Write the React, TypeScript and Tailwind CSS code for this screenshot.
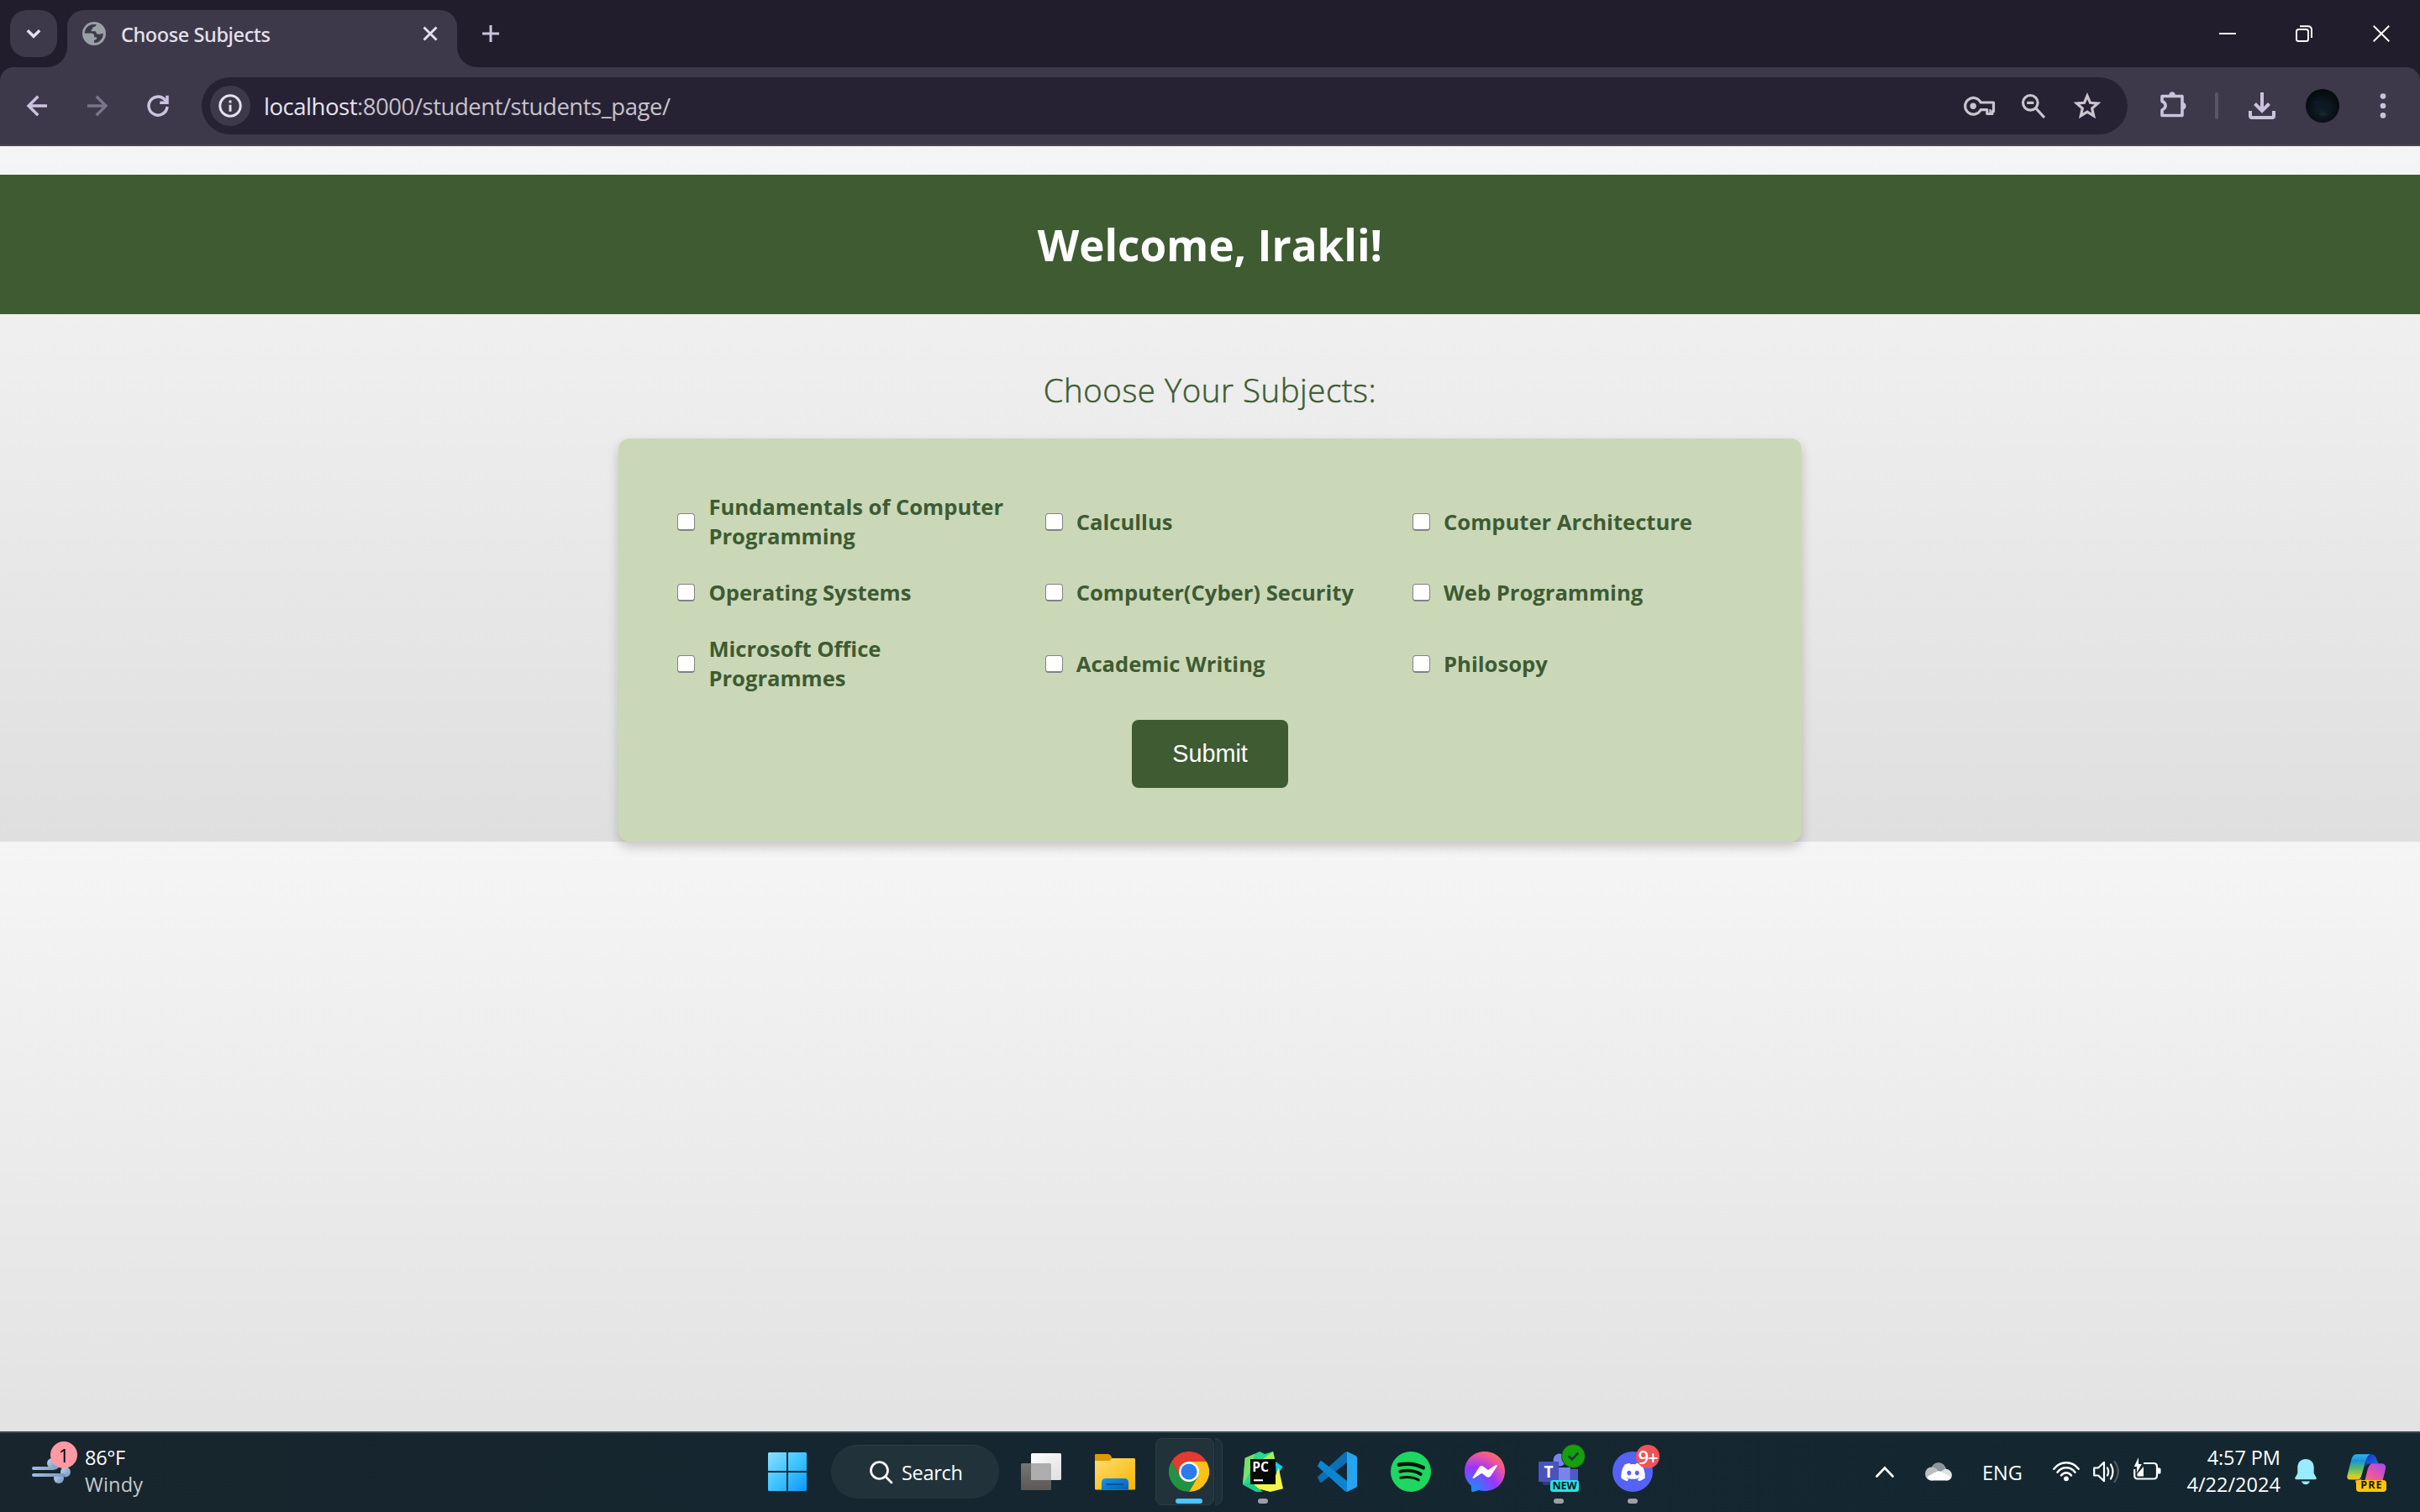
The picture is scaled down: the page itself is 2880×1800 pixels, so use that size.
import React from 'react';
import { FaDiscord } from 'react-icons/fa6';

type Kids = { children?: React.ReactNode };

const subjects = [
  'Fundamentals of Computer Programming',
  'Calcullus',
  'Computer Architecture',
  'Operating Systems',
  'Computer(Cyber) Security',
  'Web Programming',
  'Microsoft Office Programmes',
  'Academic Writing',
  'Philosopy',
];

/* ---------- Browser chrome ---------- */

function Globe() {
  return (
    <svg width="28" height="28" viewBox="0 0 28 28">
      <circle cx="14" cy="14" r="14" fill="#9aa0a6" />
      <path
        d="M2.7 13.8C2.9 8 6.900 3.700 12 2.900L17 3.200L15.400 5.600L12.600 6.300L12 8.800L10.200 9.600L11.200 11.200L15.800 11.200L17.300 14.600L21.200 14.800L24.600 13.400C25.400 18.200 21.400 24.600 14.600 25.200L13.700 22.200L17 20.600L17.200 18.600L14.300 18.300L13.600 14.600L10.600 13.600Z"
        fill="#3d394b"
      />
    </svg>
  );
}

function TabStrip() {
  return (
    <div className="flex h-[80px] items-start bg-[#211d2d] pl-3">
      <div className="mt-3 flex h-14 w-14 items-center justify-center rounded-[20px] bg-[#3d394b]">
        <svg width="20" height="14" viewBox="0 0 20 14" fill="none" stroke="#e6e0ec" strokeWidth="3.400">
          <path d="M2.800 3.200L10 10.300L17.200 3.200" />
        </svg>
      </div>
      <div className="relative mt-3 ml-3 flex h-[68px] w-[464px] rounded-t-[20px] bg-[#3d394b]">
        <svg className="absolute bottom-0 -left-6" width="24" height="24" viewBox="0 0 24 24">
          <path d="M24 0V24H0A24 24 0 0 0 24 0Z" fill="#3d394b" />
        </svg>
        <svg className="absolute -right-6 bottom-0" width="24" height="24" viewBox="0 0 24 24">
          <path d="M0 0V24H24A24 24 0 0 1 0 0Z" fill="#3d394b" />
        </svg>
        <div className="flex h-14 w-full items-center pl-[18px]">
          <Globe />
          <span className="mt-[2px] ml-[18px] font-['Noto_Sans',sans-serif] text-[23.5px] leading-8 font-medium tracking-[-0.4px] text-[#e6e0ec]">
            Choose Subjects
          </span>
          <svg className="mr-[23px] ml-auto" width="18" height="18" viewBox="0 0 18 18" fill="none" stroke="#e6e0ec" strokeWidth="3">
            <path d="M1.500 1.500L16.500 16.500M16.500 1.500L1.500 16.500" />
          </svg>
        </div>
      </div>
      <svg className="mt-[30px] ml-[30px]" width="20" height="20" viewBox="0 0 20 20" fill="none" stroke="#cbc3dd" strokeWidth="3">
        <path d="M10 0V20M0 10H20" />
      </svg>
      <div className="ml-auto flex h-[80px] items-center text-white">
        <div className="flex w-[92px] justify-center pl-[2px]">
          <svg width="20" height="20" viewBox="0 0 20 20">
            <path d="M0 9H20V11H0Z" fill="currentColor" />
          </svg>
        </div>
        <div className="flex w-[92px] justify-center">
          <svg width="20" height="20" viewBox="0 0 20 20" fill="none" stroke="currentColor" strokeWidth="2">
            <rect x="1" y="5" width="14" height="14" rx="2.500" />
            <path d="M5 1.200H14.500Q19 1.200 19 5.700V15" />
          </svg>
        </div>
        <div className="flex w-[92px] justify-center">
          <svg width="20" height="20" viewBox="0 0 20 20" fill="none" stroke="currentColor" strokeWidth="2">
            <path d="M.7 .7L19.300 19.300M19.300 .7L.7 19.300" />
          </svg>
        </div>
      </div>
    </div>
  );
}

function NavCell({ children }: Kids) {
  return <div className="flex w-[72px] shrink-0 items-center justify-center">{children}</div>;
}

function FieldCell({ children }: Kids) {
  return <div className="flex w-16 shrink-0 items-center justify-center">{children}</div>;
}

function Toolbar() {
  return (
    <div className="bg-[#211d2d]">
      <div className="flex h-[94px] items-center rounded-t-[16px] border-b-2 border-[#4a454e] bg-[#3d394b] pl-2 text-[#cbc3dd]">
        <NavCell>
          <svg width="36" height="36" viewBox="0 0 36 36" fill="none" stroke="currentColor" strokeWidth="3.400">
            <path d="M30 18H8M19.300 6.700L8 18L19.300 29.300" />
          </svg>
        </NavCell>
        <NavCell>
          <svg width="36" height="36" viewBox="0 0 36 36" fill="none" stroke="#7a7588" strokeWidth="3.400">
            <path d="M6 18H28M16.700 6.700L28 18L16.700 29.300" />
          </svg>
        </NavCell>
        <NavCell>
          <svg width="36" height="36" viewBox="0 0 36 36" fill="none" stroke="currentColor" strokeWidth="3.500">
            <path d="M29 19A11 11 0 1 1 26 10.500L28.500 13" />
            <path d="M29 5.700V14.200H20.200" />
          </svg>
        </NavCell>

        <div className="ml-4 flex h-[68px] w-[2292px] items-center rounded-full bg-[#262234] pr-4 pl-[10px]">
          <div className="flex h-12 w-12 items-center justify-center rounded-full bg-[#3d394b]">
            <svg width="28" height="28" viewBox="0 0 28 28" fill="none" stroke="#e6e0ec" strokeWidth="3">
              <circle cx="14" cy="14" r="12.200" />
              <path d="M14 12.700V20.700M14 7.400V10.400" />
            </svg>
          </div>
          <span className="mt-px ml-[16px] font-['Open_Sans',sans-serif] text-[27.5px] leading-10 tracking-[-0.46px] text-[#c8c2cc]">
            <span className="text-[#e9e4ef]">localhost</span>:8000/student/students_page/
          </span>
          <div className="ml-auto flex text-[#cac4ce]">
            <FieldCell>
              <svg width="38" height="24" viewBox="0 0 38 24" fill="none" stroke="currentColor">
                <path
                  d="M20.300 8H35.500V18.500H34V21.500H27.800V16.600H20.300A9.800 9.800 0 1 1 20.300 8Z"
                  strokeWidth="3.200"
                  strokeLinejoin="round"
                />
                <circle cx="11.200" cy="12.200" r="3.700" fill="currentColor" stroke="none" />
                <path d="M31.500 16V20" strokeWidth="2" />
              </svg>
            </FieldCell>
            <FieldCell>
              <svg width="30" height="32" viewBox="0 0 30 32" fill="none" stroke="currentColor" strokeWidth="3.200">
                <circle cx="11.300" cy="12.300" r="8.800" />
                <path d="M17.600 18.600L28 30M7.200 12.300H15.400" />
              </svg>
            </FieldCell>
            <FieldCell>
              <svg width="36" height="36" viewBox="0 0 36 36" fill="none" stroke="currentColor" strokeWidth="3.200">
                <path d="M18 6L21.500 14.300L30.500 15.100L23.700 21L25.700 29.800L18 25.100L10.300 29.800L12.300 21L5.500 15.100L14.500 14.300Z" />
              </svg>
            </FieldCell>
          </div>
        </div>

        <div className="ml-[18px]">
          <NavCell>
            <svg className="-mt-1" width="36" height="36" viewBox="0 0 36 36">
              <path
                d="M5 8.500H29V31.500H5V25C10.500 22 10.500 17 5 14.500Z"
                fill="none"
                stroke="currentColor"
                strokeWidth="3.600"
                strokeLinejoin="round"
              />
              <path d="M13 8C13 1.500 21 1.500 21 8ZM29.500 16C35 16 35 24.500 29.500 24.500Z" fill="currentColor" />
            </svg>
          </NavCell>
        </div>
        <div className="ml-[14px] h-8 w-1 rounded-full bg-[#5b5469]" />
        <div className="ml-4 flex">
          <NavCell>
            <svg width="32" height="32" viewBox="0 0 32 32" fill="none" stroke="currentColor" strokeWidth="4">
              <path d="M16 0V21M7.500 13.500L16 22L24.500 13.500" />
              <path d="M2 22V28Q2 30 4 30H28Q30 30 30 28V22" />
            </svg>
          </NavCell>
          <NavCell>
            <svg width="40" height="40" viewBox="0 0 40 40">
              <defs>
                <radialGradient id="moon" cx="50%" cy="60%" r="60%">
                  <stop offset="0" stopColor="#15202a" />
                  <stop offset=".6" stopColor="#0a1218" />
                  <stop offset="1" stopColor="#04090c" />
                </radialGradient>
              </defs>
              <circle cx="20" cy="20" r="20" fill="url(#moon)" />
              <path d="M9 15Q15 11 18 16T28 14Q32 20 27 24T18 23Q10 22 9 15Z" fill="#0d1a26" />
              <path d="M14 29Q20 26 27 30Q20 35 14 29Z" fill="#1b282c" opacity=".7" />
            </svg>
          </NavCell>
          <NavCell>
            <svg width="8" height="30" viewBox="0 0 8 30" fill="currentColor">
              <circle cx="4" cy="3.600" r="3.300" />
              <circle cx="4" cy="15" r="3.300" />
              <circle cx="4" cy="26.400" r="3.300" />
            </svg>
          </NavCell>
        </div>
      </div>
    </div>
  );
}

/* ---------- Web page ---------- */

function Page() {
  return (
    <div className="h-[1530px] bg-[linear-gradient(to_bottom,#f5f5f5,#dfdfdf)] bg-[length:100%_828px] pt-[34px] font-['Open_Sans',sans-serif]">
      <header className="flex h-[166px] items-center justify-center bg-[#3e5b32]">
        <h1 className="text-[51.2px] leading-[70px] font-bold text-white">Welcome, Irakli!</h1>
      </header>
      <h2 className="mt-16 text-center text-[38.4px] leading-[52px] font-light tracking-[0.54px] text-[#3e5b32] [-webkit-text-stroke:0.5px_#3e5b32]">
        Choose Your Subjects:
      </h2>
      <form
        className="mx-auto mt-8 flex h-[480px] w-[1408px] flex-col items-center rounded-[13px] bg-[#cad8b8] p-16 shadow-[0_6px_13px_rgba(0,0,0,0.2)]"
        onSubmit={(e) => e.preventDefault()}
      >
        <div className="grid w-full grid-cols-3 gap-8">
          {subjects.map((s) => (
            <label key={s} className="flex items-center pl-[6.4px] text-[25.6px] leading-[35px] font-bold text-[#3e5b32]">
              <input
                type="checkbox"
                className="mr-4 h-[21px] w-[21px] shrink-0 appearance-none rounded-[4px] border border-b-2 border-[#858087] bg-white"
              />
              {s}
            </label>
          ))}
        </div>
        <button
          type="submit"
          className="mt-8 h-[81px] w-[186px] rounded-[8px] bg-[#3e5b32] font-['Liberation_Sans',sans-serif] text-[28.8px] leading-[33px] text-white"
        >
          Submit
        </button>
      </form>
    </div>
  );
}

/* ---------- Taskbar ---------- */

function Slot({ children, running }: Kids & { running?: boolean }) {
  return (
    <div className="relative flex h-20 w-[88px] shrink-0 items-center justify-center">
      {children}
      {running && <span className="absolute bottom-[2px] left-[38px] h-[6px] w-3 rounded-full bg-[#9aa0a4]" />}
    </div>
  );
}

function WindowsLogo() {
  return (
    <svg width="46" height="46" viewBox="0 0 46 46">
      <defs>
        <linearGradient id="win" x1="0" y1="0" x2="46" y2="46" gradientUnits="userSpaceOnUse">
          <stop offset="0" stopColor="#8be0ff" />
          <stop offset=".5" stopColor="#40c4ff" />
          <stop offset="1" stopColor="#0a96f8" />
        </linearGradient>
      </defs>
      <path d="M1 0H22V22H0V1ZM24 0H45L46 1V22H24ZM0 24H22V46H1L0 45ZM24 24H46V45L45 46H24Z" fill="url(#win)" />
    </svg>
  );
}

function TaskView() {
  return (
    <svg width="48" height="44" viewBox="0 0 48 44">
      <defs>
        <linearGradient id="tvw" x1="0" y1="0" x2="1" y2="1">
          <stop offset="0" stopColor="#ffffff" />
          <stop offset="1" stopColor="#dedede" />
        </linearGradient>
        <linearGradient id="tvg" x1="0" y1="0" x2="0" y2="1">
          <stop offset="0" stopColor="#777474" />
          <stop offset="1" stopColor="#5c5858" />
        </linearGradient>
      </defs>
      <rect y="12" width="36" height="32" rx="1.500" fill="url(#tvg)" />
      <rect x="12" width="36" height="32" rx="1.500" fill="url(#tvw)" />
      <path d="M12 12H34.500Q36 12 36 13.500V32H13.500Q12 32 12 30.500Z" fill="#aeadad" />
    </svg>
  );
}

function Folder() {
  return (
    <svg width="48" height="44" viewBox="0 0 48 44">
      <defs>
        <linearGradient id="fy" x1="0" y1="0" x2="1" y2="1">
          <stop offset="0" stopColor="#ffdc71" />
          <stop offset="1" stopColor="#f7b500" />
        </linearGradient>
        <linearGradient id="fb" x1="0" y1="0" x2="1" y2="1">
          <stop offset="0" stopColor="#1596e4" />
          <stop offset="1" stopColor="#0060b8" />
        </linearGradient>
      </defs>
      <path d="M0 2Q0 1 1.500 1H16Q18 1 19.500 4L21 6.500V12H0Z" fill="#dc9b04" />
      <path d="M0 9H17L21 6H46.500Q48 6 48 7.500V42Q48 43.500 46.500 43.500H1.500Q0 43.500 0 42Z" fill="url(#fy)" />
      <path d="M8 43.500V35Q8 30 13 30H35Q40 30 40 35V43.500Z" fill="url(#fb)" />
      <path d="M14.500 37H33" stroke="#0b4f9b" strokeWidth="2.200" strokeLinecap="round" />
    </svg>
  );
}

function Chrome() {
  return (
    <svg width="48" height="48" viewBox="0 0 48 48">
      <path d="M3.200 12A24 24 0 0 1 44.800 12L24 12L13.600 30Z" fill="#e33b2e" />
      <path d="M44.800 12A24 24 0 0 1 24 48L34.400 30L34.400 18L24 12Z" fill="#fbc116" />
      <path d="M24 48A24 24 0 0 1 3.200 12L13.600 30L24 36L34.400 30Z" fill="#229342" />
      <circle cx="24" cy="24" r="12" fill="#fff" />
      <circle cx="24" cy="24" r="9.600" fill="#2b7bea" />
    </svg>
  );
}

function PyCharm() {
  return (
    <svg width="48" height="48" viewBox="0 0 48 48">
      <path d="M39 12L47.500 18L40 30Z" fill="#0fd0f0" />
      <path d="M2.700 7.700L20.300 0L26 3L36 0L40 16L20 47.700L16 48L0 39.300Z" fill="#2bd88d" />
      <path d="M2.700 7.700L14 3L8 26L0 39.300Z" fill="#7be06a" />
      <path d="M20 12L36 0L39 14Z" fill="#a6f05a" />
      <path d="M42.700 19.300L48 44.300L32.700 48L14.300 43.300L14 38L36 36Z" fill="#f3f54a" />
      <path d="M0 39.300L9 36L24 48H16Z" fill="#1fc98a" />
      <rect x="9" y="9" width="30" height="30" fill="#050805" />
      <path d="M13 33.200H24V35.300H13Z" fill="#fff" />
      <text x="11.300" y="24.300" fill="#fff" className="font-['Open_Sans',sans-serif] text-[15.5px] font-bold">
        PC
      </text>
    </svg>
  );
}

function VSCode() {
  return (
    <svg width="48" height="48" viewBox="0 0 48 48">
      <path d="M.8 30.500L4 36.500Q5 37.500 6.500 36.300L36 13V0Q34.500 0 33 1.200L.8 30.500Z" fill="#0a6fb5" />
      <path d="M.8 17.500L4 11.500Q5 10.500 6.500 11.700L36 35V48Q34.500 48 33 46.800L.8 17.500Z" fill="#0b85d1" />
      <path d="M36 0L46.500 5Q48 6 48 7.500V40.500Q48 42 46.500 43L36 48Z" fill="#27a4f0" />
    </svg>
  );
}

function Spotify() {
  return (
    <svg width="48" height="48" viewBox="0 0 48 48" fill="none" stroke="#04140a" strokeLinecap="round">
      <circle cx="24" cy="24" r="24" fill="#1ed760" stroke="none" />
      <path d="M9.800 15.800Q26 12.300 38.800 19.300" strokeWidth="4.500" />
      <path d="M11.200 23.800Q25 20.500 35.800 27" strokeWidth="3.800" />
      <path d="M12 31.300Q24 28.800 33.200 33.800" strokeWidth="3.100" />
    </svg>
  );
}

function Messenger() {
  return (
    <svg width="48" height="48" viewBox="0 0 48 48">
      <defs>
        <radialGradient id="msg" cx="19%" cy="99%" r="109%">
          <stop offset="0" stopColor="#0c93ff" />
          <stop offset=".55" stopColor="#9a35ff" />
          <stop offset=".85" stopColor="#ef559b" />
          <stop offset="1" stopColor="#ff6a60" />
        </radialGradient>
      </defs>
      <path d="M24 0C37.500 0 48 10 48 23.500S37.500 47 24 47Q20.500 47 17.300 46L10.500 48Q8.200 48.500 8 46.500L7.800 40.800C3 36.500 0 30.500 0 23.500C0 10 10.500 0 24 0Z" fill="url(#msg)" />
      <path
        d="M9.800 30.500L17.500 18.500Q19.600 16 22.200 17.800L27.800 22L37 16.200Q39.600 15.400 38.600 17.600L31.200 29Q29 32 26 30L20.400 25.800L11 31.900Q9 32.500 9.800 30.500Z"
        fill="#fff"
      />
    </svg>
  );
}

function Teams() {
  return (
    <div className="relative h-12 w-12">
      <svg width="48" height="48" viewBox="0 0 48 48">
        <circle cx="25" cy="10" r="7.500" fill="#7b83eb" />
        <path d="M24 19H38V36H24Z" fill="#7b83eb" />
        <path d="M37.500 21H47V36H37.500Z" fill="#5059c9" />
        <path d="M4 36H24V40H6Z" fill="#3d47a8" opacity=".6" />
        <rect y="12" width="24" height="24" rx="1" fill="#4a53bd" />
        <text x="12" y="31" textAnchor="middle" fill="#fff" className="font-['Open_Sans',sans-serif] text-[19px] font-bold">
          T
        </text>
      </svg>
      <div className="absolute -top-[9px] left-[27px] flex h-[29px] w-[29px] items-center justify-center rounded-full border border-[#2b3a25] bg-[#13a10e]">
        <svg width="13" height="10" viewBox="0 0 13 10" fill="none" stroke="#1c3a2c" strokeWidth="2.600" strokeLinecap="round">
          <path d="M1.500 5L4.800 8.300L11.500 1.500" />
        </svg>
      </div>
      <div className="absolute top-[34px] left-[14px] flex h-[14px] w-[34px] items-center justify-center rounded-[3px] bg-[#27e3e8] font-['Open_Sans',sans-serif] text-[12.5px] leading-none font-bold text-[#04191c]">
        NEW
      </div>
    </div>
  );
}

function Discord() {
  return (
    <div className="relative flex h-12 w-12 items-center justify-center rounded-full bg-[#5562f5] text-white">
      <FaDiscord size={31} />
      <div className="absolute -top-2 left-[28px] flex h-7 w-7 items-center justify-center rounded-full bg-[#f05355] font-['Open_Sans',sans-serif] text-[22px] leading-none font-semibold tracking-[-1px] text-white">
        9+
      </div>
    </div>
  );
}

function Weather() {
  return (
    <div className="relative h-12 w-[54px]">
      <svg width="54" height="48" viewBox="0 0 54 48">
        <defs>
          <linearGradient id="wind" x1="0" y1="0" x2="1" y2="1">
            <stop offset="0" stopColor="#c3d8f5" />
            <stop offset="1" stopColor="#6f92b8" />
          </linearGradient>
          <linearGradient id="gust" x1="0" y1="0" x2="48" y2="0" gradientUnits="userSpaceOnUse">
            <stop offset="0" stopColor="#a3c0e6" />
            <stop offset="1" stopColor="#7393b8" />
          </linearGradient>
        </defs>
        <circle cx="26" cy="24" r="6" fill="url(#wind)" />
        <circle cx="42" cy="34.500" r="6" fill="url(#wind)" />
        <circle cx="34" cy="42" r="6" fill="url(#wind)" />
        <path d="M4 30H26Q31 30 33 27M4 38H40" stroke="url(#gust)" strokeWidth="4" strokeLinecap="round" fill="none" />
      </svg>
      <div className="absolute -top-[2px] left-[24px] flex h-8 w-8 items-center justify-center rounded-full bg-[#ff99a4] font-['Open_Sans',sans-serif] text-[22px] leading-none text-black">
        1
      </div>
    </div>
  );
}

function Copilot() {
  return (
    <div className="relative h-[46px] w-[47px]">
      <svg width="47" height="46" viewBox="0 0 47 46">
        <defs>
          <linearGradient id="cpl" x1="0" y1="0" x2="0" y2="1">
            <stop offset="0" stopColor="#2fb4f2" />
            <stop offset=".25" stopColor="#1a93d8" />
            <stop offset=".55" stopColor="#55b96c" />
            <stop offset=".85" stopColor="#c8cf2c" />
            <stop offset="1" stopColor="#f6c21c" />
          </linearGradient>
          <linearGradient id="cpr" x1="1" y1="0" x2="0" y2="1">
            <stop offset="0" stopColor="#a24bf0" />
            <stop offset=".5" stopColor="#e955a6" />
            <stop offset="1" stopColor="#ff7d62" />
          </linearGradient>
          <linearGradient id="cpb" x1="0" y1="0" x2="1" y2="1">
            <stop offset="0" stopColor="#1034c6" />
            <stop offset="1" stopColor="#2d6fe2" />
          </linearGradient>
        </defs>
        <path d="M23 .3H30Q33 .3 34 3L37.500 11.300H28Q24.500 11.300 22 16Z" fill="url(#cpb)" />
        <path d="M12 .3H28Q24.500 1 22.500 8L17.500 25Q16 30.500 12.500 30.500H4Q-.5 30.500 .5 25.500L5.500 6Q7 .3 12 .3Z" fill="url(#cpl)" />
        <path d="M30 11.300H42Q47 12 46 17.500L42 34H10L10.500 31Q17 31 19.500 27L24 15Q26 11.300 30 11.300Z" fill="url(#cpr)" />
        <path d="M23.500 12.500L28.300 12Q26 14 25 17L21.500 31H16.500Q18.200 29 19 26Z" fill="#14262f" />
      </svg>
      <div className="absolute top-[31px] left-[11px] flex h-[14px] w-9 items-center justify-center rounded-[4px] bg-[#ffc60a] pl-px font-['Open_Sans',sans-serif] text-[12.5px] leading-none font-bold tracking-[1px] text-[#1a1503]">
        PRE
      </div>
    </div>
  );
}

function Taskbar() {
  return (
    <div className="flex h-24 items-center border-t-2 border-[#3c474e] bg-[linear-gradient(to_right,#18252c,#152630_35%,#142730)] pb-[2px] font-['Open_Sans',sans-serif] text-[23.5px] text-white">
      <div className="flex w-[914px] items-center pl-9">
        <div className="-mt-5">
          <Weather />
        </div>
        <div className="-mt-[3px] ml-[11px] leading-8">
          <div className="tracking-[-0.3px]">86°F</div>
          <div className="tracking-[0.2px] text-[#c6cacd]">Windy</div>
        </div>
      </div>

      <WindowsLogo />
      <div className="ml-[29px] flex h-16 w-[200px] items-center rounded-full border-t border-[#2e3d45] bg-[#22323a] pl-[46px]">
        <svg width="28" height="28" viewBox="0 0 28 28" fill="none" stroke="#fff" strokeWidth="2.700" strokeLinecap="round">
          <circle cx="11.500" cy="11.500" r="10" />
          <path d="M18.800 18.800L26 26" />
        </svg>
        <span className="mt-px ml-[10px] leading-8 tracking-[-0.3px]">Search</span>
      </div>
      <div className="ml-[6px] flex">
        <Slot>
          <TaskView />
        </Slot>
        <Slot>
          <Folder />
        </Slot>
        <Slot>
          <div className="flex h-20 w-20">
            <div className="w-[70px] rounded-[8px] border border-[#2f3e46] bg-[#22323a]" />
            <div className="ml-px w-[9px] rounded-r-[10px] border border-l-0 border-[#2f3e46] bg-[#1f2f37]" />
          </div>
          <div className="absolute top-4 left-5">
            <Chrome />
          </div>
          <span className="absolute bottom-[2px] left-[28px] h-[6px] w-8 rounded-full bg-[#4cc2ff]" />
        </Slot>
        <Slot running>
          <PyCharm />
        </Slot>
        <Slot>
          <VSCode />
        </Slot>
        <Slot>
          <Spotify />
        </Slot>
        <Slot>
          <Messenger />
        </Slot>
        <Slot running>
          <Teams />
        </Slot>
        <Slot running>
          <Discord />
        </Slot>
      </div>

      <svg className="ml-[245px]" width="22" height="14" viewBox="0 0 22 14" fill="none" stroke="#fff" strokeWidth="2.600" strokeLinecap="round">
        <path d="M1.500 12.500L11 2.500L20.500 12.500" />
      </svg>
      <svg className="ml-[37px]" width="32" height="22" viewBox="0 0 32 22">
        <circle cx="16" cy="9" r="9" fill="#8c969b" />
        <circle cx="8" cy="13.500" r="8" fill="#b9bfc2" />
        <path d="M15 13L24 7.500Q31.500 8.500 32 15Q31.500 21.500 25.500 21.500Z" fill="#dfe1e2" />
        <path d="M2.500 17L13.500 11Q16 9.600 19 11L31 17Q29.500 21.500 25.500 21.500H7Q3.500 21 2.500 17Z" fill="#fff" />
      </svg>
      <span className="mt-[2px] ml-[36px] leading-8">ENG</span>
      <svg className="ml-[36px]" width="32" height="24" viewBox="0 0 32 24" fill="none" stroke="#fff" strokeWidth="2.400" strokeLinecap="round">
        <path d="M1.300 8.800Q7 1.300 16 1.300T30.700 8.800M5.500 12.800Q9.500 7.300 16 7.300T26.500 12.800M10 16.500Q12.500 13.300 16 13.300T22 16.500" />
        <circle cx="16" cy="20.300" r="2.900" fill="#fff" stroke="none" />
      </svg>
      <svg className="ml-4" width="32" height="28" viewBox="0 0 32 28" fill="none" stroke="#fff" strokeWidth="2.200" strokeLinecap="round" strokeLinejoin="round">
        <path d="M1.200 9.500H6L13 2.800V25.200L6 18.500H1.200Z" />
        <path d="M17 9.500Q19.300 14 17 18.500M21 5.500Q26 14 21 22.500" />
        <path d="M25.500 2Q34 14 25.500 26" stroke="#4b5a61" />
      </svg>
      <svg className="-mt-[6px] ml-4" width="33" height="28" viewBox="0 0 33 28">
        <path d="M12 7H24Q28 7 28 11V21.500Q28 25.500 24 25.500H5Q1.200 25.500 1.200 21.500V14" fill="none" stroke="#fff" strokeWidth="2.200" />
        <path d="M28 12.500H31Q32.500 12.500 32.500 14V18Q32.500 19.500 31 19.500H28Z" fill="#fff" />
        <path d="M6 0V8H9.800L4 18.500V11H.8Z" fill="#fff" />
        <path d="M12 11V22.500H4.500V19.500Z" fill="#fff" />
      </svg>
      <div className="-mt-[3px] ml-[30px] w-[112px] text-right leading-8">
        <div className="tracking-[-0.1px]">4:57 PM</div>
        <div>4/22/2024</div>
      </div>
      <svg className="ml-[17px]" width="26" height="31" viewBox="0 0 26 31" fill="#99ebff">
        <path d="M13 0C19 0 22.700 4.200 22.700 10V17L25.800 22.500Q26 24.300 24.500 24.300H1.500Q0 24.300 .2 22.500L3.300 17V10C3.300 4.200 7 0 13 0ZM8 26.500H18Q16.500 30.300 13 30.300T8 26.500Z" />
      </svg>
      <div className="mt-[3px] ml-9">
        <Copilot />
      </div>
    </div>
  );
}

export default function App() {
  return (
    <div className="h-[1800px] w-[2880px] overflow-hidden">
      <TabStrip />
      <Toolbar />
      <Page />
      <Taskbar />
    </div>
  );
}
